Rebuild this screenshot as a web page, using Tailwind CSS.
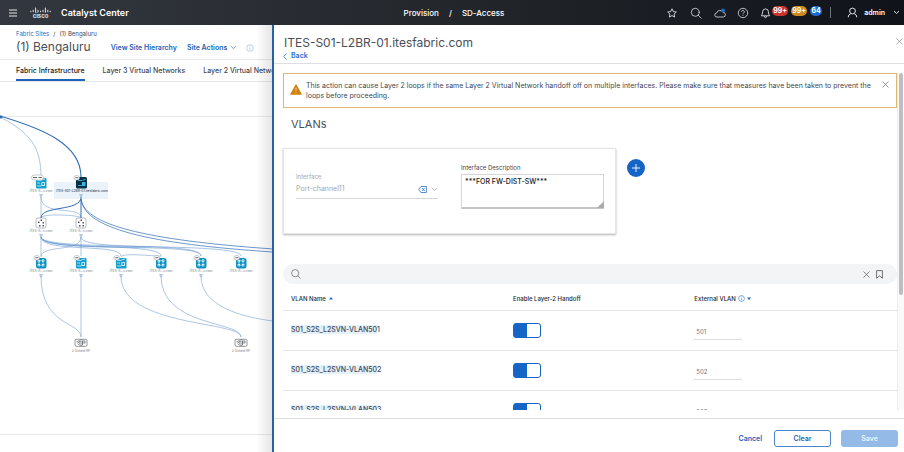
<!DOCTYPE html>
<html lang="en">
<head>
<meta charset="utf-8">
<meta name="viewport" content="width=device-width, initial-scale=1">
<title>Catalyst Center</title>
<script src="https://cdn.jsdelivr.net/npm/@tailwindcss/browser@4"></script>
</head>
<body class="flex h-screen flex-col overflow-hidden bg-white font-['Inter','Liberation_Sans',sans-serif] text-[7px] leading-[10px] text-[#3f4652]">

<header class="grid h-[25px] shrink-0 grid-cols-[1fr_auto_1fr] items-center bg-linear-to-r from-[#33373f] via-[#23272c] to-[#101319] pr-1 pl-2 text-white">
  <div class="flex items-center">
    <button type="button" aria-label="Menu" class="mr-3 flex w-[10px] justify-center">
      <svg width="8" height="8" viewBox="0 0 8 8" stroke="#e4e6e9" stroke-width="1"><path d="M0 1h8M0 4h8M0 7h8"/></svg>
    </button>
    <div class="mr-[10px] flex flex-col items-center text-[6px] leading-[5px] font-bold text-[#dfe2e6]">
      <svg width="21" height="6" viewBox="0 0 21 6" stroke="#dfe2e6" stroke-width="1" stroke-linecap="round"><path d="M.8 4.2v.6M3.2 3.2v1.6M5.6 1v4.3M8 3.2v1.6M10.500 4.200v.6M13 3.200v1.600M15.400 1v4.300M17.800 3.200v1.600M20.200 4.200v.6"/></svg>
      <span>cisco</span>
    </div>
    <span class="text-[9px] font-semibold">Catalyst Center</span>
  </div>
  <nav aria-label="Location" class="flex gap-[10px] text-[8px] font-medium"><a href="#">Provision</a><span>/</span><a href="#">SD-Access</a></nav>
  <div class="flex items-center justify-end">
    <button type="button" aria-label="Favorites" class="mr-3"><svg width="12" height="12" viewBox="0 0 12 12" fill="none" stroke="#dcdfe3" stroke-width=".9" stroke-linejoin="round"><path d="M6 1.800 7.300 4.600l3 .4-2.200 2.100.6 3L6 8.600l-2.700 1.500.6-3L1.700 5l3-.4z"/></svg></button>
    <button type="button" aria-label="Search" class="mr-3"><svg width="12" height="12" viewBox="0 0 12 12" fill="none" stroke="#c9cdd2" stroke-width=".9" stroke-linecap="round"><circle cx="5.300" cy="5.300" r="4"/><path d="m8.200 8.200 3 3"/></svg></button>
    <button type="button" aria-label="Cloud" class="mr-[11px]"><svg width="12" height="12" viewBox="0 0 12 12" fill="none" stroke="#c9cdd2" stroke-width=".9"><path d="M3 10a2 2 0 0 1-.4-4A3.400 3.400 0 0 1 9 5.400 2.300 2.300 0 0 1 9.200 10z"/><circle cx="9" cy="3.500" r="2" fill="#1d69cc" stroke="none"/></svg></button>
    <button type="button" aria-label="Help" class="mr-[11px]"><svg width="12" height="12" viewBox="0 0 12 12" fill="none" stroke="#c9cdd2" stroke-width=".9"><circle cx="6" cy="6" r="4.700"/><path d="M4.600 4.900a1.400 1.400 0 1 1 2 1.200q-.6.3-.6 1M6 7.900v.9"/></svg></button>
    <button type="button" aria-label="Notifications" class="flex items-center gap-[3px] text-[7px] leading-[10px] font-bold">
      <svg class="-mr-[2px]" width="11" height="12" viewBox="0 0 11 12" fill="none" stroke="#dcdfe3" stroke-width=".9" stroke-linejoin="round"><path d="M1.300 8.800Q2.600 7.500 2.600 4.800a2.900 2.900 0 0 1 5.800 0q0 2.700 1.300 4zM4.300 9q.2 1.700 1.200 1.700T6.700 9"/></svg>
      <span class="mb-1 w-4 rounded-full bg-[#c9352b] text-center">99+</span>
      <span class="mb-1 w-4 rounded-full bg-[#c98a1f] text-center">99+</span>
      <span class="mb-1 w-3 rounded-full bg-[#1d69cc] text-center">64</span>
    </button>
    <span class="mr-4 ml-2 h-[11px] w-px bg-[#6f747b]"></span>
    <button type="button" class="flex items-center text-[7px] font-semibold">
      <svg class="mr-[6px]" width="11" height="11" viewBox="0 0 11 11" fill="none" stroke="#dcdfe3" stroke-width="1"><circle cx="5.500" cy="4" r="2.900"/><path d="M1.200 10.300q0-2.800 2.600-3.700M9.800 10.300q0-2.800-2.600-3.700"/></svg>
      admin
      <svg class="ml-2" width="7" height="5" viewBox="0 0 7 5" fill="none" stroke="#dcdfe3" stroke-width="1"><path d="m1 1 2.500 2.500L6 1"/></svg>
    </button>
  </div>
</header>

<div class="flex min-h-0 flex-1">
  <main class="relative flex w-[272px] shrink-0 flex-col overflow-hidden">
    <div class="border-b border-[#e6e7ea] px-4 pt-1">
      <nav aria-label="Breadcrumb" class="flex gap-1 pt-px text-[6px] leading-[8px]"><a href="#" class="text-[#2a6fc4]">Fabric Sites</a><span>/</span><span>(1) Bengaluru</span></nav>
      <div class="flex items-center whitespace-nowrap pb-[3px]">
        <h1 class="mr-5 text-[12px] leading-[18px] text-[#4a4f57]">(1) Bengaluru</h1>
        <a href="#" class="mr-[10px] pt-px text-[7px] font-semibold text-[#1d63b8]">View Site Hierarchy</a>
        <button type="button" class="flex items-center gap-[3px] pt-px font-semibold text-[#1d63b8]">Site Actions
          <svg width="7" height="5" viewBox="0 0 7 5" fill="none" stroke="#4a86cc" stroke-width=".8"><path d="m.8 1 2.700 2.700L6.200 1"/></svg>
        </button>
        <button type="button" aria-label="Site information" class="ml-[9px] pt-px"><svg width="8" height="8" viewBox="0 0 8 8" fill="none" stroke="#9dbbe0" stroke-width=".7"><circle cx="4" cy="4" r="3.300"/><path d="M4 3.600v2M4 2.200v.7"/></svg></button>
      </div>
    </div>
    <nav aria-label="Fabric views" class="flex gap-[18px] border-b border-[#e6e7ea] px-4 whitespace-nowrap">
      <a href="#" aria-current="page" class="border-b-2 border-[#1d63b8] pt-[6px] pb-[3px] font-medium text-[#15181d]">Fabric Infrastructure</a>
      <a href="#" class="pt-[6px] font-medium">Layer 3 Virtual Networks</a>
      <a href="#" class="pt-[6px] font-medium">Layer 2 Virtual Networks</a>
    </nav>
    <svg class="min-h-0 w-full flex-1 font-['Inter','Liberation_Sans',sans-serif]" viewBox="0 81 272 371" preserveAspectRatio="xMinYMin slice" role="img" aria-label="Fabric topology" fill="none">
      <defs>
        <g id="edge-node"><rect x="-5" y="-5" width="10.500" height="10.500" rx="1" fill="#129fd0"/><path d="M-3.800-2.600h4.300M-3.800 0H-1M-3.800 2.900h4" stroke="#d9f2fb" stroke-width=".8"/><path d="M.5-3.300 4-3.800" stroke="#d9f2fb" stroke-width=".8"/><rect x=".4" y="-.8" width="3.600" height="3.800" fill="#d9f2fb"/><rect x="1.300" y="0" width="1.800" height="2" fill="#129fd0"/></g>
        <g id="switch-node"><rect x="-5" y="-5" width="10.500" height="10.500" rx="2.500" fill="#0d91c1"/><path d="M-2-2 2-2.500M-2 2.200H2M-2-2v4M2-2.500v4.700" stroke="#d9f2fb" stroke-width=".7"/><path d="M-3.300-3h2.300v2.300h-2.300zM1-3.500h2.300v2.300H1zM-3.300 1h2.300v2.300h-2.300zM1 1h2.300v2.300H1z" fill="#fff"/><path d="M-2.700-2.300h1.100v1.100h-1.100zM1.600-2.800h1.100v1.100H1.600zM-2.700 1.700h1.100v1.100h-1.100zM1.600 1.700h1.100v1.100H1.600z" fill="#0d91c1"/></g>
        <g id="mid-node"><rect x="-5" y="-5" width="10" height="10" rx="2" fill="#fff" stroke="#9a9da3" stroke-width=".7"/><path d="M-3-1.500h1.500v1.500H-3zM-.5-3.500H1V-2H-.5zM1.500-1H3V.5H1.500zM-2 2h1.500v1.500H-2zM1.500 2H3v1.500H1.500z" fill="#55585f"/></g>
        <g id="tag"><rect x="-7" y="-7.500" width="5.500" height="4.500" rx="2.200" fill="#fff" stroke="#a5a8ad" stroke-width=".6"/><path d="M-5.700-5.300h3" stroke="#666a72" stroke-width="1"/></g>
        <g id="ap"><rect x="-6" y="-3.700" width="7" height="7" rx="1.300" fill="#fff" stroke="#777a80" stroke-width=".8"/><rect x="-1" y="-3.700" width="7" height="7" rx="1.300" stroke="#777a80" stroke-width=".8"/><path d="M-4.500-1.200q2-1.700 4 0M-3.700.1q1.200-1 2.400 0M-2.500 1v.8M1.500 2v-4h2.500v2H1.500" stroke="#666a70" stroke-width=".8"/></g>
        <path id="port" d="M-1.800-.3h3.600M-1.200.8h2.400M0 .8v1.500" stroke="#7ba3d3" stroke-width=".7"/>
      </defs>
      <path d="M0 115.500h272M0 433.500h272" stroke="#e8e9ec"/>
      <g stroke="#8caed8" stroke-width=".7">
        <path d="M2 117c28 15 39 29 39 59M41 196v21M41 196c0 20 40 8 40 21M41 217c0-5 40-3 40 0M81 236v19M41 236v19M81 236c0 16-40 7-40 20M121 256c0-5 40 0 40-1"/>
        <path d="M41 275c0 50 40 46 40 61M81 275v61M121 275c0 51 120 45 120 61M161 275c0 51 80 45 80 61M201 275c0 30 40 41 72 45"/>
      </g>
      <g stroke="#2f6cb5" stroke-width=".7">
        <path d="M0 115c40 12 81 27 81 61" stroke-width="1.100"/><path d="M81 196v21M81 196c0 15-40 8-40 21" stroke-width="1"/><path d="M81 196c0 28 65 43 192 52M81 196c0 32 70 47 192 55"/>
      </g>
      <g stroke="#6c9ad2" stroke-width=".6"><path d="M41 236c0 17 160 4 160 19M41 236c0 14 120 5 120 19M41 236c0 16 80 6 80 19M41 236c0 15 200 4 200 19M81 236c0 15 120 4 120 19M41 236c0 11 70 10 110 10"/></g>
      <circle cx="1" cy="116" r="1.500" fill="#2f6cb5"/>
      <rect x="54" y="181" width="54" height="17" fill="#d6e8f6" fill-opacity=".5"/>
      <use href="#edge-node" x="41" y="182"/>
      <rect x="31.500" y="174" width="12" height="5" rx="2.500" fill="#fff" stroke="#a5a8ad" stroke-width=".6"/><path d="M33 176.500h4m1.500 0h3.500" stroke="#666a72" stroke-width="1"/>
      <rect x="76" y="176" width="11" height="11.500" rx="1.500" fill="#062f45"/><path d="M78 179.500h4.500M78 184.500h4M83 179l2.500-.5" stroke="#35b7e2" stroke-width=".9"/><rect x="82" y="181" width="3.500" height="4" fill="#35b7e2"/><use href="#tag" x="81" y="182"/>
      <use href="#mid-node" x="41" y="222"/><use href="#mid-node" x="81" y="222"/>
      <use href="#switch-node" x="41" y="262"/><use href="#edge-node" x="81" y="262"/><use href="#edge-node" x="121" y="262"/><use href="#switch-node" x="161" y="262"/><use href="#switch-node" x="201" y="262"/><use href="#switch-node" x="241" y="262"/>
      <use href="#tag" x="41" y="262"/><use href="#tag" x="81" y="262"/><use href="#tag" x="121" y="262"/><use href="#tag" x="161" y="262"/><use href="#tag" x="201" y="262"/><use href="#tag" x="241" y="262"/>
      <use href="#port" x="41" y="194"/><use href="#port" x="81" y="194"/><use href="#port" x="41" y="234"/><use href="#port" x="81" y="234"/><use href="#port" x="41" y="274"/><use href="#port" x="81" y="274"/><use href="#port" x="121" y="274"/><use href="#port" x="161" y="274"/><use href="#port" x="201" y="274"/>
      <use href="#ap" x="81" y="342"/><use href="#ap" x="241" y="342"/>
      <g font-size="3.300" text-anchor="middle" fill="#7a7d84">
        <text x="41" y="190.500">ITES-S...v.com</text><text x="41" y="230.500">ITES-S...v.com</text><text x="81" y="230.500">ITES-S...v.com</text>
        <text x="41" y="270.500">ITES-S...v.com</text><text x="81" y="270.500">ITES-S...v.com</text><text x="121" y="270.500">ITES-S...v.com</text><text x="161" y="270.500">ITES-S...v.com</text><text x="201" y="270.500">ITES-S...v.com</text><text x="241" y="270.500">ITES-S...v.com</text>
        <text x="81" y="350.500">2 United AP</text><text x="241" y="350.500">2 United AP</text>
        <text x="82" y="190.500" fill="#24282f">ITES-S01-L2BR-01.itesfabric.com</text>
      </g>
    </svg>
    <div class="pointer-events-none absolute inset-y-0 right-0 w-4 bg-linear-to-r from-transparent to-black/10"></div>
  </main>

  <section aria-label="Layer 2 handoff" class="flex min-w-0 flex-1 flex-col border-l-2 border-[#2463a8]">
    <div class="flex items-start justify-between border-b border-[#dcdee2] pt-[10px] pb-[2px] pl-[9px]">
      <div>
        <h2 class="pl-px text-[12px] leading-[16px] text-[#4a4f57]">ITES-S01-L2BR-01.itesfabric.com</h2>
        <a href="#" class="flex items-center gap-1 font-semibold text-[#1d6bd0]"><svg width="4" height="7" viewBox="0 0 4 7" fill="none" stroke="#1d6bd0" stroke-width=".8"><path d="M3.500.5.700 3.500l2.800 3"/></svg>Back</a>
      </div>
      <button type="button" aria-label="Close panel" class="mt-[3px] mr-px"><svg width="7" height="7" viewBox="0 0 7 7" stroke="#9a9da3" stroke-width=".8"><path d="m.5.5 6 6m0-6-6 6"/></svg></button>
    </div>

    <div class="mt-[9px] mb-2 flex min-h-0 flex-1 overflow-hidden">
      <div class="min-w-0 flex-1 pl-[9px]">
        <div role="alert" class="flex items-start border border-[#e0b672] pt-[7px] pr-[7px] pb-[6px] pl-[6px]">
          <svg class="mt-[3px] mr-1 shrink-0" width="12" height="11" viewBox="0 0 12 11"><path d="M6 .8 11.300 10.200H.7z" fill="#d0810d" stroke="#d0810d" stroke-linejoin="round"/><path d="M6 3.800v3M6 7.800v1" stroke="#f7deb3" stroke-width=".9"/></svg>
          <p class="flex-1">This action can cause Layer 2 loops if the same Layer 2 Virtual Network handoff off on multiple interfaces. Please make sure that measures have been taken to prevent the loops before proceeding.</p>
          <button type="button" aria-label="Dismiss" class="ml-1"><svg width="7" height="7" viewBox="0 0 7 7" stroke="#7d8087" stroke-width=".8"><path d="m.5.5 6 6m0-6-6 6"/></svg></button>
        </div>
        <h3 class="mt-2 pl-2 text-[11px] leading-[16px] text-[#4a4f57]">VLANs</h3>

        <div class="mt-4 flex items-start">
          <div class="grid w-[333px] grid-cols-[142px_143px] gap-x-[23px] border border-[#e4e5e8] px-3 pt-[14px] pb-[24px] shadow-[0_1px_2px_rgba(0,0,0,.3)]">
            <div class="pt-[9px] text-[#a4a7ad]">
              <label for="iface" class="block text-[6px] leading-[10px]">Interface</label>
              <div class="flex items-center border-b border-[#d3d5d9] pb-[2px]">
                <select id="iface" disabled class="min-w-0 flex-1 appearance-none bg-transparent text-[7px] leading-[14px]"><option>Port-channel11</option></select>
                <button type="button" aria-label="Clear interface" class="mr-1"><svg width="9" height="7" viewBox="0 0 9 7" fill="none" stroke="#2a70c8" stroke-width=".8"><path d="M3 .5h5.400v6H3L.6 3.500zM4 2l2.700 3M6.700 2 4 5"/></svg></button>
                <svg width="7" height="5" viewBox="0 0 7 5" fill="none" stroke="#a4a7ad" stroke-width=".8"><path d="m.8 1 2.700 2.700L6.200 1"/></svg>
              </div>
            </div>
            <div>
              <label for="desc" class="block pb-px text-[6px] leading-[10px]">Interface Description</label>
              <div class="relative">
                <textarea id="desc" class="block h-[35px] w-full resize-none border border-b-2 border-[#d3d5d9] border-b-[#c4c6ca] px-[3px] py-[2px] text-[7px] leading-[10px] font-medium text-[#15181d]">***FOR FW-DIST-SW***</textarea>
                <svg class="pointer-events-none absolute right-0 bottom-px" width="7" height="7" viewBox="0 0 7 7"><path d="M7 0v7H0z" fill="#a9abb0"/></svg>
              </div>
            </div>
          </div>
          <button type="button" aria-label="Add interface" class="mt-[11px] ml-[11px] flex size-[18px] items-center justify-center rounded-full bg-[#1565c6]"><svg width="8" height="8" viewBox="0 0 8 8" stroke="#fff" stroke-width=".9"><path d="M4 0v8M0 4h8"/></svg></button>
        </div>

        <div class="mt-[30px] flex h-5 items-center rounded-full bg-[#f3f4f6] pr-[14px] pl-2">
          <svg width="10" height="10" viewBox="0 0 10 10" fill="none" stroke="#70747b" stroke-width=".8"><circle cx="4.200" cy="4.200" r="3.600"/><path d="m6.800 6.800 2.700 2.700"/></svg>
          <input type="search" aria-label="Search VLANs" class="min-w-0 flex-1 bg-transparent px-2 outline-none">
          <button type="button" aria-label="Clear search" class="mr-[6px]"><svg width="7" height="7" viewBox="0 0 7 7" stroke="#5f636a" stroke-width=".8"><path d="m.5.5 6 6m0-6-6 6"/></svg></button>
          <button type="button" aria-label="Saved filters"><svg width="7" height="9" viewBox="0 0 7 9" fill="none" stroke="#5f636a" stroke-width=".9"><path d="M.6.600h5.800v7.600L3.500 5.900.6 8.200z"/></svg></button>
        </div>

        <table class="w-full table-fixed border-collapse text-left">
          <colgroup><col class="w-[36%]"><col class="w-[31%]"><col></colgroup>
          <thead>
            <tr class="h-[26px] border-b border-[#e2e3e6] text-[6px] text-[#24282f]">
              <th class="pt-1 pl-2 font-medium"><span class="flex items-center gap-[3px]">VLAN Name <svg width="4" height="3" viewBox="0 0 4 3"><path d="M0 2.500 2 0l2 2.500z" fill="#1d6bd0"/></svg></span></th>
              <th class="pt-1 pl-[9px] font-medium">Enable Layer-2 Handoff</th>
              <th class="pt-1 font-medium"><span class="flex items-center gap-[2px]">External VLAN <svg width="7" height="7" viewBox="0 0 7 7" fill="none" stroke="#3d85d6" stroke-width=".7"><circle cx="3.500" cy="3.500" r="2.900"/><path d="M3.500 3.200v1.900M3.500 1.800v.7"/></svg><svg width="4" height="3" viewBox="0 0 4 3"><path d="M0 .5 2 3l2-2.500z" fill="#1d6bd0"/></svg></span></th>
            </tr>
          </thead>
          <tbody>
            <tr class="h-10 border-b border-[#e2e3e6]">
              <td class="pl-2 font-medium"><span class="bg-[#e4f1fa]">S01_S2S_L2SVN-VLAN50</span>1</td>
              <td class="pl-[9px]"><input type="checkbox" checked aria-label="Enable Layer-2 handoff for VLAN 501" class="block h-[15px] w-[28px] appearance-none rounded-[3px] border border-[#1565c6] bg-linear-to-r from-[#1565c6] from-50% to-white to-50%"></td>
              <td class="pt-[3px]"><input type="text" value="501" aria-label="External VLAN 501" class="block h-[17px] w-12 border-b border-[#dcdee2] px-[2px] text-[6px] text-[#70747b]"></td>
            </tr>
            <tr class="h-10 border-b border-[#e2e3e6]">
              <td class="pl-2 font-medium"><span class="bg-[#e4f1fa]">S01_S2S_L2SVN-VLAN50</span>2</td>
              <td class="pl-[9px]"><input type="checkbox" checked aria-label="Enable Layer-2 handoff for VLAN 502" class="block h-[15px] w-[28px] appearance-none rounded-[3px] border border-[#1565c6] bg-linear-to-r from-[#1565c6] from-50% to-white to-50%"></td>
              <td class="pt-[3px]"><input type="text" value="502" aria-label="External VLAN 502" class="block h-[17px] w-12 border-b border-[#dcdee2] px-[2px] text-[6px] text-[#70747b]"></td>
            </tr>
            <tr class="h-10 border-b border-[#e2e3e6]">
              <td class="pl-2 font-medium"><span class="bg-[#e4f1fa]">S01_S2S_L2SVN-VLAN50</span>3</td>
              <td class="pl-[9px]"><input type="checkbox" checked aria-label="Enable Layer-2 handoff for VLAN 503" class="block h-[15px] w-[28px] appearance-none rounded-[3px] border border-[#1565c6] bg-linear-to-r from-[#1565c6] from-50% to-white to-50%"></td>
              <td class="pt-[3px]"><input type="text" value="503" aria-label="External VLAN 503" class="block h-[17px] w-12 border-b border-[#dcdee2] px-[2px] text-[6px] text-[#70747b]"></td>
            </tr>
          </tbody>
        </table>
      </div>
      <div class="w-[7px] shrink-0 border-l border-[#ececee] bg-[#fafafb] pl-px"><div class="h-[66%] w-1 rounded-full bg-[#bdbec1]"></div></div>
    </div>

    <footer class="flex items-center justify-end border-t border-[#dcdee2] pt-[11px] pr-[6px] pb-[5px] font-semibold">
      <button type="button" class="mr-3 text-[#1d63b8]">Cancel</button>
      <button type="button" class="mr-[10px] h-[17px] w-[57px] rounded-[3px] border border-[#4a86cc] text-[#1d63b8]">Clear</button>
      <button type="button" class="h-[17px] w-[57px] rounded-[3px] bg-[#94bbe8] text-[#eaf3fc]">Save</button>
    </footer>
  </section>
</div>
</body>
</html>
